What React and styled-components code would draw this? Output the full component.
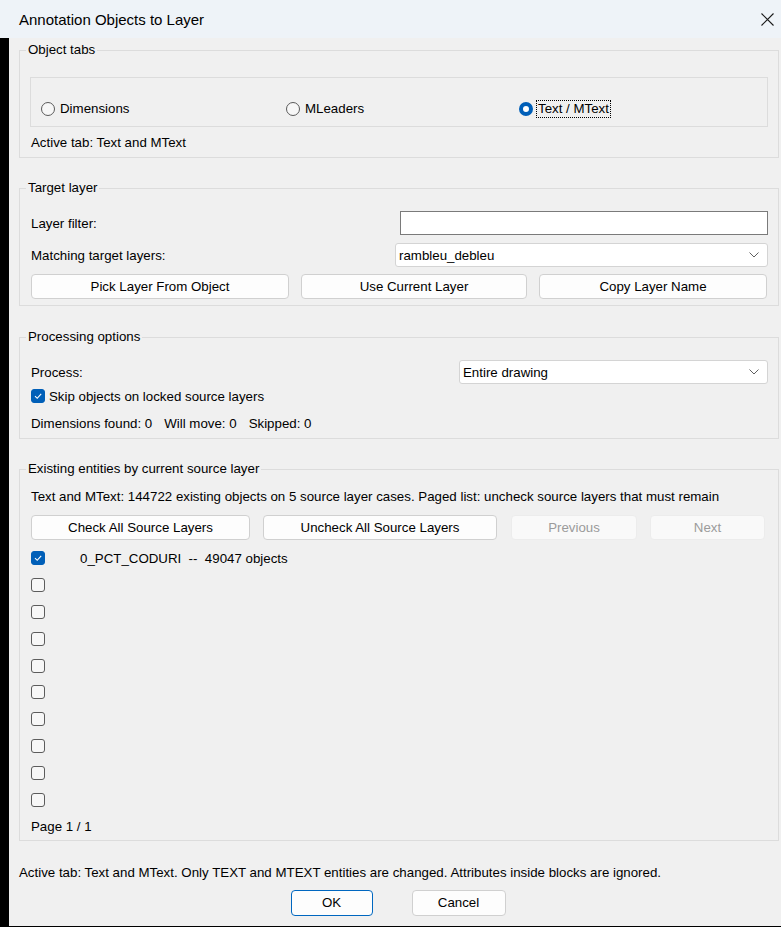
import React from "react";
import styled, { createGlobalStyle } from "styled-components";

const Global = createGlobalStyle`
  html, body { margin: 0; padding: 0; background: #f0f0f0; }
  body { font-family: "Liberation Sans", Arial, sans-serif; font-size: 13.3px; color: #000; }
  * { box-sizing: border-box; }
`;

const Window = styled.div`
  width: 781px;
  height: 927px;
  display: flex;
  flex-direction: column;
  background: #f0f0f0;
`;

const TitleBar = styled.div`
  height: 38px;
  flex: none;
  display: flex;
  align-items: center;
  justify-content: space-between;
  padding: 0 0 0 19px;
  background: #eef3f8;
  font-size: 15px;
`;

const CloseBtn = styled.div`
  width: 28px;
  height: 30px;
  display: flex;
  align-items: center;
  justify-content: center;
`;

const Body = styled.div`
  flex: 1;
  display: flex;
  flex-direction: column;
  border-left: 9px solid #000;
  border-bottom: 1px solid #000;
  padding: 4px 2px 0 10px;
`;

const Group = styled.fieldset`
  margin: ${(p) => p.$mt || 0}px 0 0 0;
  border: 1px solid #dcdcdc;
  padding: ${(p) => p.$pt}px 11px ${(p) => p.$pb}px 11px;
  min-width: 0;
  display: flex;
  flex-direction: column;
`;

const Legend = styled.legend`
  margin-left: -5px;
  padding: 0 2px;
  line-height: 16px;
`;

const TabBox = styled.div`
  margin: 0 -1px;
  height: 50px;
  border: 1px solid #dcdcdc;
  display: flex;
  align-items: flex-end;
  padding: 0 0 9px 10px;
`;

const RadioItem = styled.label`
  width: ${(p) => p.$w}px;
  flex: none;
  display: flex;
  align-items: center;
  gap: 5px;
  line-height: 16px;
`;

const RadioDot = styled.span`
  width: 14px;
  height: 14px;
  border-radius: 50%;
  flex: none;
  background: ${(p) => (p.$on ? "#fff" : "#f7f7f7")};
  border: ${(p) => (p.$on ? "4px solid #005fb8" : "1px solid #5a5a5a")};
`;

const Focus = styled.span`
  outline: 1px dotted #000;
  outline-offset: 0;
  padding: 0 1px;
  margin-left: -1px;
`;

const Line = styled.div`
  line-height: 16px;
  margin-top: ${(p) => p.$mt || 0}px;
  white-space: nowrap;
  display: flex;
  gap: ${(p) => p.$gap || 0}px;
`;

const FieldRow = styled.div`
  display: flex;
  align-items: center;
  justify-content: space-between;
  height: 24px;
  margin-top: ${(p) => p.$mt || 0}px;
  margin-right: -1px;
`;

const TextInput = styled.div`
  width: ${(p) => p.$w}px;
  height: 24px;
  background: #fff;
  border: 1px solid #7a7a7a;
`;

const Select = styled.div`
  width: ${(p) => p.$w}px;
  height: 24px;
  background: #fff;
  border: 1px solid #d4d4d4;
  border-radius: 3px;
  display: flex;
  align-items: center;
  justify-content: space-between;
  padding: 0 8px 0 3px;
`;

const ButtonRow = styled.div`
  display: flex;
  gap: ${(p) => p.$gap || 12}px;
  margin-top: ${(p) => p.$mt || 0}px;
`;

const Button = styled.div`
  width: ${(p) => p.$w}px;
  height: 25px;
  flex: none;
  display: flex;
  align-items: center;
  justify-content: center;
  margin-left: ${(p) => p.$ml || 0}px;
  background: ${(p) => (p.$disabled ? "#f9f9f9" : "#fdfdfd")};
  color: ${(p) => (p.$disabled ? "#9b9b9b" : "#000")};
  border: 1px solid ${(p) => (p.$disabled ? "#ececec" : p.$primary ? "#0067c0" : "#d0d0d0")};
  border-radius: 4px;
`;

const CheckRow = styled.div`
  display: flex;
  align-items: center;
  height: ${(p) => p.$h || 16}px;
  margin-top: ${(p) => p.$mt || 0}px;
  gap: ${(p) => p.$gap || 4}px;
`;

const Box = styled.span`
  width: 14px;
  height: 14px;
  flex: none;
  border-radius: 3px;
  background: ${(p) => (p.$on ? "#005fb8" : "#f7f7f7")};
  border: 1px solid ${(p) => (p.$on ? "#005fb8" : "#5c5c5c")};
  display: flex;
  align-items: center;
  justify-content: center;
`;

const List = styled.div`
  display: flex;
  flex-direction: column;
  margin-top: 5px;
`;

const Footer = styled.div`
  display: flex;
  flex-direction: column;
  margin-top: 24px;
`;

const FooterButtons = styled.div`
  display: flex;
  justify-content: center;
  gap: 39px;
  margin-top: 9px;
  padding-right: 2px;
`;

const FooterButton = styled(Button)`
  height: 26px;
`;

const Check = () => (
  <svg width="10" height="10" viewBox="0 0 10 10">
    <path d="M2 5.2 L4.2 7.3 L8.2 2.8" fill="none" stroke="#fff" strokeWidth="1.1" />
  </svg>
);

const Chevron = () => (
  <svg width="10" height="6" viewBox="0 0 10 6">
    <path d="M0.5 0.5 L5 5 L9.5 0.5" fill="none" stroke="#606060" strokeWidth="1" />
  </svg>
);

export default function App() {
  const rows = Array.from({ length: 10 }, (_, i) => i);
  return (
    <Window>
      <Global />
      <TitleBar>
        <span>Annotation Objects to Layer</span>
        <CloseBtn>
          <svg width="13" height="13" viewBox="0 0 13 13">
            <path d="M0.5 0.5 L12.5 12.5 M12.5 0.5 L0.5 12.5" stroke="#1a1a1a" strokeWidth="1.1" />
          </svg>
        </CloseBtn>
      </TitleBar>
      <Body>
        <Group $pt={19} $pb={6}>
          <Legend>Object tabs</Legend>
          <TabBox>
            <RadioItem $w={245}>
              <RadioDot />
              Dimensions
            </RadioItem>
            <RadioItem $w={233}>
              <RadioDot />
              MLeaders
            </RadioItem>
            <RadioItem $w={120}>
              <RadioDot $on />
              <Focus>Text / MText</Focus>
            </RadioItem>
          </TabBox>
          <Line $mt={8}>Active tab: Text and MText</Line>
        </Group>

        <Group $mt={22} $pt={15} $pb={6}>
          <Legend>Target layer</Legend>
          <FieldRow>
            <span>Layer filter:</span>
            <TextInput $w={368} />
          </FieldRow>
          <FieldRow $mt={8}>
            <span>Matching target layers:</span>
            <Select $w={373}>
              <span>rambleu_debleu</span>
              <Chevron />
            </Select>
          </FieldRow>
          <ButtonRow $mt={7}>
            <Button $w={258}>Pick Layer From Object</Button>
            <Button $w={226}>Use Current Layer</Button>
            <Button $w={228}>Copy Layer Name</Button>
          </ButtonRow>
        </Group>

        <Group $mt={23} $pt={15} $pb={6}>
          <Legend>Processing options</Legend>
          <FieldRow>
            <span>Process:</span>
            <Select $w={309}>
              <span>Entire drawing</span>
              <Chevron />
            </Select>
          </FieldRow>
          <CheckRow $mt={4}>
            <Box $on>
              <Check />
            </Box>
            Skip objects on locked source layers
          </CheckRow>
          <Line $mt={12} $gap={12}>
            <span>Dimensions found: 0</span>
            <span>Will move: 0</span>
            <span>Skipped: 0</span>
          </Line>
        </Group>

        <Group $mt={22} $pt={12} $pb={5}>
          <Legend>Existing entities by current source layer</Legend>
          <Line>
            Text and MText: 144722 existing objects on 5 source layer cases. Paged list: uncheck source layers that must remain
          </Line>
          <ButtonRow $mt={10} $gap={13}>
            <Button $w={219}>Check All Source Layers</Button>
            <Button $w={234}>Uncheck All Source Layers</Button>
            <Button $w={126} $ml={1} $disabled>
              Previous
            </Button>
            <Button $w={115} $disabled>
              Next
            </Button>
          </ButtonRow>
          <List>
            {rows.map((i) => (
              <CheckRow key={i} $h={26.8} $gap={35}>
                <Box $on={i === 0}>{i === 0 && <Check />}</Box>
                {i === 0 && <span>0_PCT_CODURI&nbsp; --&nbsp; 49047 objects</span>}
              </CheckRow>
            ))}
          </List>
          <Line $mt={6}>Page 1 / 1</Line>
        </Group>

        <Footer>
          <Line>
            Active tab: Text and MText. Only TEXT and MTEXT entities are changed. Attributes inside blocks are ignored.
          </Line>
          <FooterButtons>
            <FooterButton $w={82} $primary>
              OK
            </FooterButton>
            <FooterButton $w={94}>Cancel</FooterButton>
          </FooterButtons>
        </Footer>
      </Body>
    </Window>
  );
}
